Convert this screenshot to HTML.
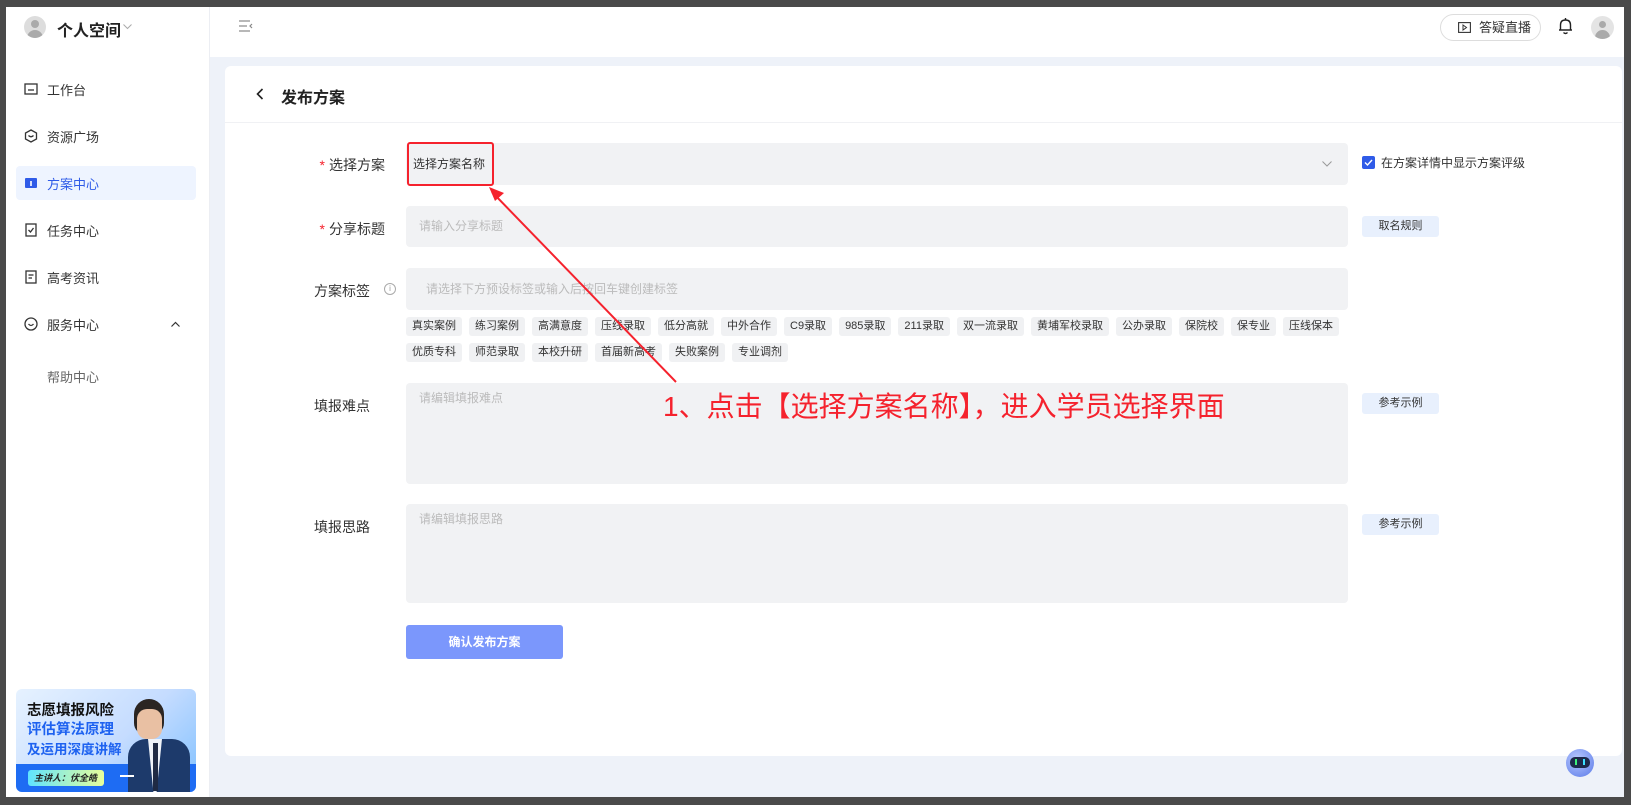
<!DOCTYPE html>
<html><head><meta charset="utf-8">
<style>
*{box-sizing:border-box;margin:0;padding:0}
body{width:1631px;height:805px;background:#4a4a4a;font-family:"Liberation Sans","Noto Sans CJK SC",sans-serif;position:relative;overflow:hidden;color:#222}
.abs{position:absolute}
#side{left:6px;top:7px;width:204px;height:790px;background:#fff;border-right:1px solid #eceef3}
#main{left:210px;top:7px;width:1414px;height:790px;background:#eef2f9}
#hdr{left:210px;top:7px;width:1414px;height:50px;background:#fff}
.nav{position:absolute;left:18px;width:178px;height:34px;display:flex;align-items:center;font-size:13px;color:#333}
.nav svg{margin-left:6px;margin-right:9px}
.lbl{position:absolute;font-size:14px;color:#333;text-align:right;width:160px;left:225px}
.lbl i{color:#f5222d;font-style:normal;margin-right:4px}
.inp{position:absolute;left:406px;width:942px;background:#f1f2f4;border-radius:4px;font-size:12px;color:#bbb;padding-left:13px}
.tags{position:absolute;left:406px;display:flex;gap:7px}
.tags span{background:#f0f1f3;border-radius:3px;font-size:11px;color:#333;height:19px;line-height:19px;padding:0 6px}
.sbtn{position:absolute;left:1362px;width:77px;height:21px;background:#e8f0fd;border-radius:3px;font-size:11px;color:#333;text-align:center;line-height:21px}
</style></head><body>
<div id="side" class="abs"></div>
<div id="main" class="abs"></div>
<div id="hdr" class="abs"></div>
<!-- logo -->
<div class="abs" style="left:24px;top:16px;width:22px;height:22px;border-radius:50%;background:#ddd;overflow:hidden">
<div style="position:absolute;left:7px;top:4px;width:8px;height:8px;border-radius:50%;background:#aaa"></div>
<div style="position:absolute;left:3px;top:14px;width:16px;height:10px;border-radius:8px 8px 0 0;background:#aaa"></div></div>
<div class="abs" style="left:57px;top:17px;font-size:16px;font-weight:bold;color:#222">个人空间</div>
<svg class="abs" style="left:123px;top:24px" width="9" height="6" viewBox="0 0 9 6"><path d="M0.5 0.5L4.5 4.5L8.5 0.5" fill="none" stroke="#aaa" stroke-width="1"/></svg>
<!-- nav -->
<div class="nav" style="top:72px"><svg width="14" height="14" viewBox="0 0 14 14"><rect x="1" y="2" width="12" height="10" fill="none" stroke="#333" stroke-width="1.3"/><line x1="4" y1="8" x2="10" y2="8" stroke="#333" stroke-width="1.3"/></svg>工作台</div>
<div class="nav" style="top:119px"><svg width="14" height="14" viewBox="0 0 14 14"><path d="M7 1L12.5 4V10L7 13L1.5 10V4Z" fill="none" stroke="#333" stroke-width="1.3"/><path d="M4.5 6.5Q7 9 9.5 6.5" fill="none" stroke="#333" stroke-width="1.3"/></svg>资源广场</div>
<div class="nav" style="top:166px;background:#eef4ff;border-radius:4px;left:16px;width:180px;color:#2f5be8"><svg width="14" height="14" viewBox="0 0 14 14" style="margin-left:8px"><rect x="1" y="2" width="12" height="10" rx="1" fill="#2f5be8"/><rect x="6.2" y="5" width="1.6" height="5" fill="#fff"/></svg>方案中心</div>
<div class="nav" style="top:213px"><svg width="14" height="14" viewBox="0 0 14 14"><rect x="2" y="1" width="10" height="12" fill="none" stroke="#333" stroke-width="1.3"/><path d="M4.5 7L6.5 9L9.5 5" fill="none" stroke="#333" stroke-width="1.3"/></svg>任务中心</div>
<div class="nav" style="top:260px"><svg width="14" height="14" viewBox="0 0 14 14"><rect x="2" y="1" width="10" height="12" fill="none" stroke="#333" stroke-width="1.3"/><line x1="4.5" y1="5" x2="9.5" y2="5" stroke="#333" stroke-width="1.3"/><line x1="4.5" y1="8" x2="8" y2="8" stroke="#333" stroke-width="1.3"/></svg>高考资讯</div>
<div class="nav" style="top:307px"><svg width="14" height="14" viewBox="0 0 14 14"><circle cx="7" cy="7" r="6" fill="none" stroke="#333" stroke-width="1.3"/><path d="M4.5 7Q7 10 9.5 7" fill="none" stroke="#333" stroke-width="1.3"/></svg>服务中心</div>
<svg class="abs" style="left:171px;top:321px" width="9" height="6" viewBox="0 0 9 6"><path d="M0.5 5.5L4.5 1.5L8.5 5.5" fill="none" stroke="#333" stroke-width="1.2"/></svg>
<div class="abs" style="left:47px;top:367px;font-size:13px;color:#666">帮助中心</div>
<!-- banner -->
<div class="abs" style="left:16px;top:689px;width:180px;height:103px;border-radius:6px;overflow:hidden;background:linear-gradient(135deg,#e6f2ff 0%,#c5dcff 55%,#7fc0ff 100%)">
<div style="position:absolute;left:0;top:75px;width:180px;height:28px;background:#1e6cf3"></div>
<div style="position:absolute;left:118px;top:10px;width:30px;height:36px;border-radius:15px 15px 12px 12px;background:#2b2522"></div>
<div style="position:absolute;left:121px;top:20px;width:25px;height:30px;border-radius:10px;background:#e9c0a3"></div>
<div style="position:absolute;left:112px;top:50px;width:62px;height:60px;border-radius:18px 18px 0 0;background:#1d3a6b"></div>
<div style="position:absolute;left:132px;top:50px;width:14px;height:55px;background:#eef2f8;clip-path:polygon(0 0,100% 0,60% 100%,40% 100%)"></div>
<div style="position:absolute;left:137px;top:54px;width:5px;height:48px;background:#1f2a44"></div>
<div style="position:absolute;left:11px;top:13px;font-size:14.5px;font-weight:bold;color:#111;line-height:19px">志愿填报风险</div>
<div style="position:absolute;left:11px;top:32px;font-size:14.5px;font-weight:bold;color:#1e62f0;line-height:19px">评估算法原理</div>
<div style="position:absolute;left:11px;top:51px;font-size:13.5px;font-weight:bold;color:#1e62f0;line-height:19px">及运用深度讲解</div>
<div style="position:absolute;left:12px;top:81px;width:76px;height:16px;border-radius:3px;background:linear-gradient(90deg,#5fe3ff,#e8ff9a);font-size:9px;font-weight:bold;line-height:16px;padding-left:6px;font-style:italic">主讲人：伏全皓</div>
<div style="position:absolute;left:104px;top:86px;width:14px;height:1.5px;background:#fff"></div>
</div>
<!-- header right -->
<svg class="abs" style="left:238px;top:19px" width="15" height="14" viewBox="0 0 15 14"><g stroke="#888" stroke-width="1.2" fill="none"><line x1="1" y1="2" x2="12" y2="2"/><line x1="1" y1="7" x2="9" y2="7"/><line x1="1" y1="12" x2="12" y2="12"/><path d="M14 5L12 7L14 9"/></g></svg>
<div class="abs" style="left:1440px;top:14px;width:101px;height:27px;border:1px solid #ddd;border-radius:14px;font-size:13px;line-height:25px;padding-left:38px;color:#333">答疑直播</div>
<svg class="abs" style="left:1458px;top:22px" width="13" height="11" viewBox="0 0 13 11"><rect x="0.6" y="0.6" width="11.8" height="9.8" fill="none" stroke="#333" stroke-width="1.1"/><path d="M5 3L8.5 5.5L5 8Z" fill="none" stroke="#333" stroke-width="1"/></svg>
<svg class="abs" style="left:1558px;top:17px" width="15" height="18" viewBox="0 0 15 18"><path d="M2.5 13V8Q2.5 3 7.5 3Q12.5 3 12.5 8V13H14H1Z" fill="none" stroke="#222" stroke-width="1.4"/><path d="M5.5 15.5Q7.5 17.5 9.5 15.5" fill="none" stroke="#222" stroke-width="1.4"/><line x1="7.5" y1="1" x2="7.5" y2="3" stroke="#222" stroke-width="1.4"/></svg>
<div class="abs" style="left:1591px;top:16px;width:23px;height:23px;border-radius:50%;background:#e4e4e4;overflow:hidden">
<div style="position:absolute;left:8px;top:5px;width:7px;height:7px;border-radius:50%;background:#aaa"></div>
<div style="position:absolute;left:4px;top:14px;width:15px;height:10px;border-radius:8px 8px 0 0;background:#aaa"></div></div>
<!-- card -->
<div class="abs" style="left:225px;top:66px;width:1397px;height:690px;background:#fff;border-radius:6px"></div>
<div class="abs" style="left:225px;top:122px;width:1397px;height:1px;background:#f0f1f4"></div>
<svg class="abs" style="left:256px;top:88px" width="8" height="12" viewBox="0 0 8 12"><path d="M6.5 1L1.5 6L6.5 11" fill="none" stroke="#222" stroke-width="1.6"/></svg>
<div class="abs" style="left:281px;top:84px;font-size:16px;font-weight:bold;color:#222">发布方案</div>
<!-- form -->
<div class="lbl" style="top:155px"><i>*</i>选择方案</div>
<div class="inp" style="top:143px;height:42px;line-height:42px;color:#333;padding-left:7px">选择方案名称</div>
<svg class="abs" style="left:1322px;top:161px" width="10" height="6" viewBox="0 0 10 6"><path d="M0.5 0.5L5 5L9.5 0.5" fill="none" stroke="#999" stroke-width="1"/></svg>
<div class="abs" style="left:1362px;top:156px;width:13px;height:13px;background:#2f5be8;border-radius:2px"><svg width="13" height="13" viewBox="0 0 13 13"><path d="M3 6.5L5.5 9L10 4" fill="none" stroke="#fff" stroke-width="1.4"/></svg></div>
<div class="abs" style="left:1381px;top:154px;font-size:12px;color:#333">在方案详情中显示方案评级</div>
<div class="lbl" style="top:219px"><i>*</i>分享标题</div>
<div class="inp" style="top:206px;height:41px;line-height:41px">请输入分享标题</div>
<div class="sbtn" style="top:216px">取名规则</div>
<div class="lbl" style="top:281px;left:210px">方案标签</div>
<div class="abs" style="left:384px;top:283px;width:12px;height:12px;border:1px solid #aaa;border-radius:50%;font-size:8px;color:#999;text-align:center;line-height:10px">i</div>
<div class="inp" style="top:268px;height:42px;line-height:42px;padding-left:20px">请选择下方预设标签或输入后按回车键创建标签</div>
<div class="tags" style="top:317px"><span>真实案例</span><span>练习案例</span><span>高满意度</span><span>压线录取</span><span>低分高就</span><span>中外合作</span><span>C9录取</span><span>985录取</span><span>211录取</span><span>双一流录取</span><span>黄埔军校录取</span><span>公办录取</span><span>保院校</span><span>保专业</span><span>压线保本</span></div>
<div class="tags" style="top:343px"><span>优质专科</span><span>师范录取</span><span>本校升研</span><span>首届新高考</span><span>失败案例</span><span>专业调剂</span></div>
<div class="lbl" style="top:396px;left:210px">填报难点</div>
<div class="inp" style="top:383px;height:101px;padding-top:6px">请编辑填报难点</div>
<div class="sbtn" style="top:393px">参考示例</div>
<div class="lbl" style="top:517px;left:210px">填报思路</div>
<div class="inp" style="top:504px;height:99px;padding-top:6px">请编辑填报思路</div>
<div class="sbtn" style="top:514px">参考示例</div>
<div class="abs" style="left:406px;top:625px;width:157px;height:34px;background:#7b97fc;border-radius:3px;color:#fff;font-size:12px;font-weight:bold;text-align:center;line-height:34px">确认发布方案</div>
<!-- annotation -->
<div class="abs" style="left:407px;top:142px;width:87px;height:44px;border:2px solid #f5222d;border-radius:3px"></div>
<svg class="abs" style="left:0;top:0" width="1631" height="805"><line x1="676" y1="382" x2="492" y2="192" stroke="#f5222d" stroke-width="2"/><path d="M489 187L504 193L495 201Z" fill="#f5222d"/></svg>
<div class="abs" style="left:663px;top:385px;font-size:28px;color:#f5222d;white-space:nowrap">1、点击【选择方案名称】，进入学员选择界面</div>
<!-- robot -->
<div class="abs" style="left:1566px;top:749px;width:28px;height:28px;border-radius:50%;background:radial-gradient(circle at 40% 35%,#b8c8ff,#5a7ae8)"></div>
<div class="abs" style="left:1570px;top:757px;width:20px;height:11px;border-radius:5px;background:#1d2a4a"></div>
<div class="abs" style="left:1575px;top:759px;width:2px;height:6px;background:#3df07a"></div>
<div class="abs" style="left:1583px;top:759px;width:2px;height:6px;background:#3de0ff"></div>
</body></html>
